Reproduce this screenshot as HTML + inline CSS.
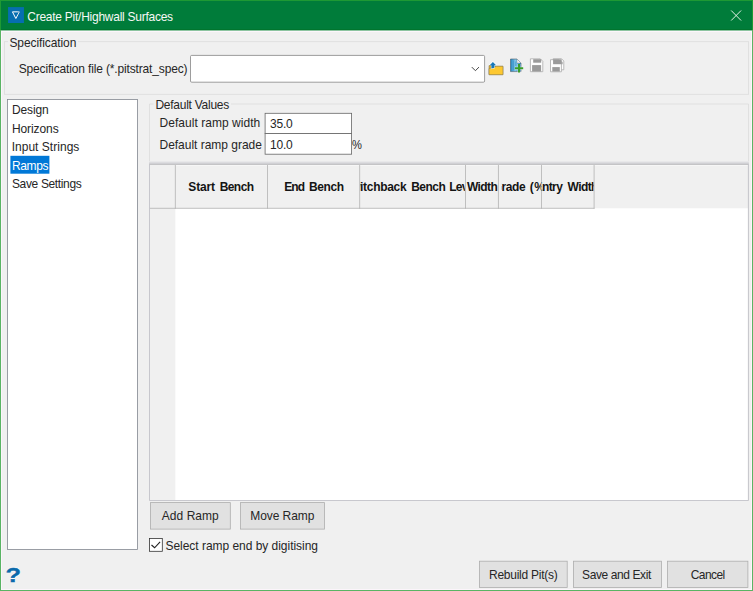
<!DOCTYPE html>
<html lang="en"><head><meta charset="utf-8"><title>Create Pit/Highwall Surfaces</title>
<style>
html,body{margin:0;padding:0;background:#f0f0f0;overflow:hidden;width:753px;height:591px}
#root{position:absolute;left:0;top:0;width:945px;height:740px;transform:scale(0.8);transform-origin:0 0;
  font-family:"Liberation Sans",sans-serif;font-size:15px;color:#000;background:#f0f0f0;overflow:hidden}
#root *{box-sizing:border-box}
.a{position:absolute}
.t{position:absolute;white-space:pre}

</style></head>
<body>
<div id="root">
<!-- all geometry drawn in one SVG: 1 unit = 1.25 css px = 1 device px after the 0.8 scale -->
<svg class="a" style="left:0;top:0" width="945" height="740" viewBox="0 0 756 592" shape-rendering="geometricPrecision">
<!-- window frame -->
<rect x="0" y="0" width="753.00" height="591.00" fill="#f0f0f0"/>
<rect x="0" y="0" width="753.00" height="30.40" fill="#007c3a"/>
<rect x="0" y="29" width="753.00" height="1.00" fill="#00752e"/>
<rect x="0" y="30" width="753.00" height="1.00" fill="#8cc4a0"/>
<rect x="0" y="31" width="753.00" height="1.00" fill="#fcf6fb"/>
<rect x="1" y="31" width="1.00" height="559.00" fill="#fcf5fb"/>
<rect x="751" y="31" width="1.00" height="559.00" fill="#fcf5fb"/>
<rect x="1" y="589" width="751.00" height="1.00" fill="#fcf5fb"/>
<rect x="0" y="30" width="1.00" height="561.00" fill="#5ab464"/>
<rect x="752" y="30" width="1.00" height="561.00" fill="#5ab464"/>
<rect x="0" y="590" width="753.00" height="1.00" fill="#5ab464"/>
<rect x="0" y="0" width="1.00" height="30.00" fill="#1e9934"/>
<rect x="752" y="0" width="1.00" height="30.00" fill="#1e9934"/>
<rect x="0" y="0" width="753.00" height="1.00" fill="#1e9934"/>
<!-- app icon -->
<rect x="8.05" y="7.1" width="15.90" height="15.90" fill="#066eb0"/>
<defs><linearGradient id="tg" x1="0" x2="1" y1="0" y2="0"><stop offset="0" stop-color="#fff"/><stop offset="0.6" stop-color="#fff"/><stop offset="1" stop-color="#c4d2dc"/></linearGradient></defs>
<path d="M12.45 11.85 H19.4 L15.85 18.5 Z" fill="none" stroke="url(#tg)" stroke-width="1" stroke-linejoin="miter"/>
<!-- close button -->
<path d="M731.2 10.5 L741.1 20.5 M741.1 10.5 L731.2 20.5" stroke="#eef5ee" stroke-width="0.95" fill="none"/>
<!-- Specification group box -->
<rect x="4.4" y="41.7" width="744.20" height="52.60" fill="none" stroke="#dcdcdc" stroke-width="0.8"/>
<rect x="8" y="36" width="70.00" height="12.00" fill="#f0f0f0"/>
<!-- combo box -->
<rect x="190.5" y="55.4" width="294.10" height="26.80" fill="#fff" stroke="#858585" stroke-width="0.8" rx="1.2"/>
<path d="M471.8 67.1 L475.4 70.7 L479 67.1" stroke="#3c3c3c" stroke-width="0.95" fill="none"/>
<!-- toolbar icons -->
 <!-- open folder with arrow -->
 <path d="M489 74.6 V65.6 H492.6 L493.6 66.4 H502.8 V74.6 Z" fill="#e2b02c" stroke="#8c7c50" stroke-width="0.6"/>
 <path d="M489 74.7 V68.6 L496.6 66.2 H503 V74.7 Z" fill="#fdc830" stroke="#8c7c50" stroke-width="0.6" stroke-linejoin="round"/>
 <path d="M492.9 61 L497 65.1 H495 V68.2 L490.9 69.3 V65.1 H488.9 Z" fill="#fff" opacity="0.75"/>
 <path d="M492.9 61.9 L496.1 65.2 H494.4 V67.8 L491.4 68.6 V65.2 H489.7 Z" fill="#1878b8"/>
 <!-- document with plus -->
 <defs><linearGradient id="pg" x1="0" x2="1" y1="0" y2="0"><stop offset="0" stop-color="#1f82bd"/><stop offset="0.45" stop-color="#86c8ea"/><stop offset="1" stop-color="#1f82bd"/></linearGradient></defs>
 <path d="M510.5 59 H517 L521 63 V71.6 H510.5 Z" fill="url(#pg)" stroke="#4a5c6a" stroke-width="0.6"/>
 <path d="M517 59 L521 63 H517 Z" fill="#f1f1f1" stroke="#8a8f94" stroke-width="0.4"/>
 <path d="M513.6 60.5 V70.4 M515.6 61.5 V66" stroke="#1f82bd" stroke-width="0.7" fill="none" opacity="0.6"/>
 <path d="M519 64 V72.5 M514.9 68.2 H523.2" stroke="#fff" stroke-width="3" fill="none" opacity="0.6"/>
 <path d="M519 64 V72.5 M514.9 68.2 H523.2" stroke="#3a9e2a" stroke-width="2" fill="none"/>
 <!-- save (disabled) -->
 <path d="M530.4 58.8 H540.3 L542.8 61.3 V71.7 H530.4 Z" fill="#fdfdfd" stroke="#adadad" stroke-width="0.85"/>
 <rect x="533.2" y="59.2" width="8" height="3.5" fill="#9a9a9a"/>
 <rect x="532.1" y="65.1" width="9" height="6.4" fill="#9a9a9a"/>
 <!-- save all (disabled) -->
 <path d="M553.2 58.7 H561.5 L563.8 61 V69.8 H553.2 Z" fill="#fdfdfd" stroke="#adadad" stroke-width="0.85"/>
 <path d="M550.5 59.7 H559.2 L561.4 61.9 V71.8 H550.5 Z" fill="#fdfdfd" stroke="#adadad" stroke-width="0.85"/>
 <rect x="553.1" y="59.3" width="8.6" height="4.9" fill="#9a9a9a"/>
 <path d="M561.7 61.2 V64.2 H562.6 V62 Z" fill="#9a9a9a"/>
 <rect x="552.3" y="67.1" width="7.5" height="4.4" fill="#9a9a9a"/>

<!-- list box -->
<rect x="7.5" y="99.5" width="130.00" height="449.90" fill="#fff" stroke="#828790" stroke-width="0.8"/>
<rect x="10.4" y="155.8" width="39.00" height="17.90" fill="#0078d7"/>
<!-- Default Values group box -->
<path d="M149.5 500.5 V104 H748.5 V500.5" fill="none" stroke="#dcdcdc" stroke-width="0.8"/>
<rect x="153.5" y="98" width="77.50" height="12.00" fill="#f0f0f0"/>
<rect x="265.1" y="113.3" width="86.50" height="20.30" fill="#fff" stroke="#666" stroke-width="0.8"/>
<rect x="265.1" y="133.6" width="86.50" height="20.60" fill="#fff" stroke="#666" stroke-width="0.8"/>
<!-- grid -->
<rect x="149.1" y="161" width="599.70" height="1.00" fill="#e8e8ea"/>
<rect x="149.1" y="162" width="599.70" height="1.00" fill="#dcdcdf"/>
<rect x="149.1" y="163" width="599.70" height="1.00" fill="#d0d0d4"/>
<rect x="149.1" y="164" width="599.70" height="1.00" fill="#c4c4c6"/>
<rect x="149.9" y="165" width="598.10" height="335.10" fill="#fff"/>
<rect x="149.9" y="165" width="598.10" height="43.30" fill="#f0f0f0"/>
<rect x="149.9" y="165" width="598.10" height="1.00" fill="#f6f6f6"/>
<rect x="149.9" y="165" width="25.45" height="335.10" fill="#f0f0f0"/>
<path d="M149.5 164.5 V500.5 H748.4 V164.5" fill="none" stroke="#c3c3c9" stroke-width="0.9"/>
<line x1="175.35" y1="165" x2="175.35" y2="208.7" stroke="#b2b2b2" stroke-width="0.8"/>
<line x1="267.5" y1="165" x2="267.5" y2="208.7" stroke="#b2b2b2" stroke-width="0.8"/>
<line x1="359.65" y1="165" x2="359.65" y2="208.7" stroke="#b2b2b2" stroke-width="0.8"/>
<line x1="465.5" y1="165" x2="465.5" y2="208.7" stroke="#b2b2b2" stroke-width="0.8"/>
<line x1="498.45" y1="165" x2="498.45" y2="208.7" stroke="#b2b2b2" stroke-width="0.8"/>
<line x1="541.5" y1="165" x2="541.5" y2="208.7" stroke="#b2b2b2" stroke-width="0.8"/>
<line x1="594.1" y1="165" x2="594.1" y2="208.7" stroke="#b2b2b2" stroke-width="0.8"/>
<line x1="149.9" y1="208.3" x2="594.5" y2="208.3" stroke="#b0b0b0" stroke-width="0.8"/>
<!-- buttons -->
<rect x="150.4" y="502.6" width="79.90" height="26.50" fill="#e1e1e1" stroke="#adadad" stroke-width="0.8"/>
<rect x="240.5" y="502.6" width="84.00" height="26.50" fill="#e1e1e1" stroke="#adadad" stroke-width="0.8"/>
<rect x="149.5" y="538.5" width="12.80" height="12.80" fill="#fff" stroke="#333" stroke-width="0.8"/>
<path d="M151.5 545 L154.6 547.8 L160.1 541.8" stroke="#222" stroke-width="1.15" fill="none"/>
<rect x="479.4" y="561.2" width="87.80" height="26.30" fill="#e1e1e1" stroke="#adadad" stroke-width="0.8"/>
<rect x="573.4" y="561.2" width="88.00" height="26.30" fill="#e1e1e1" stroke="#adadad" stroke-width="0.8"/>
<rect x="667.5" y="561.2" width="80.40" height="26.30" fill="#e1e1e1" stroke="#adadad" stroke-width="0.8"/>
</svg>

<span id="title" class="t" style="left:34.09px;top:12.55px;font-size:15px;line-height:15px;letter-spacing:-0.318px;color:#f6f8f6;">Create Pit/Highwall Surfaces</span>
<span id="gb1" class="t" style="left:11.75px;top:45.80px;font-size:15px;line-height:15px;letter-spacing:-0.111px;color:#262626;">Specification</span>
<span id="specfile" class="t" style="left:23.34px;top:77.68px;font-size:15px;line-height:15px;letter-spacing:-0.186px;color:#262626;">Specification file (*.pitstrat_spec)</span>
<span id="li1" class="t" style="left:14.90px;top:129.68px;font-size:15px;line-height:15px;letter-spacing:-0.145px;color:#262626;">Design</span>
<span id="li2" class="t" style="left:14.98px;top:152.80px;font-size:15px;line-height:15px;letter-spacing:-0.123px;color:#262626;">Horizons</span>
<span id="li3" class="t" style="left:14.54px;top:175.80px;font-size:15px;line-height:15px;letter-spacing:0.037px;color:#262626;">Input Strings</span>
<span id="li4" class="t" style="left:14.98px;top:198.80px;font-size:15px;line-height:15px;letter-spacing:-0.491px;color:#fff;">Ramps</span>
<span id="li5" class="t" style="left:14.96px;top:221.80px;font-size:15px;line-height:15px;letter-spacing:-0.442px;color:#262626;">Save Settings</span>
<span id="gb2" class="t" style="left:194.29px;top:123.05px;font-size:15px;line-height:15px;letter-spacing:-0.318px;color:#262626;">Default Values</span>
<span id="drw" class="t" style="left:199.38px;top:146.18px;font-size:15px;line-height:15px;letter-spacing:0.048px;color:#262626;">Default ramp width</span>
<span id="drg" class="t" style="left:199.38px;top:173.18px;font-size:15px;line-height:15px;letter-spacing:-0.027px;color:#262626;">Default ramp grade</span>
<span id="v1" class="t" style="left:337.51px;top:147.30px;font-size:15px;line-height:15px;letter-spacing:-0.243px;color:#262626;">35.0</span>
<span id="v2" class="t" style="left:337.54px;top:172.93px;font-size:15px;line-height:15px;letter-spacing:-0.253px;color:#262626;">10.0</span>
<span id="pct" class="t" style="left:439.92px;top:172.93px;font-size:15px;line-height:15px;letter-spacing:0.000px;color:#262626;transform:scaleX(0.93);transform-origin:0 0;">%</span>
<span id="addramp" class="t" style="left:202.21px;top:637.18px;font-size:15px;line-height:15px;letter-spacing:0.058px;color:#262626;">Add Ramp</span>
<span id="moveramp" class="t" style="left:312.82px;top:637.18px;font-size:15px;line-height:15px;letter-spacing:-0.082px;color:#262626;">Move Ramp</span>
<span id="cblabel" class="t" style="left:206.83px;top:674.55px;font-size:15px;line-height:15px;letter-spacing:-0.039px;color:#262626;">Select ramp end by digitising</span>
<span id="rebuild" class="t" style="left:611.27px;top:710.93px;font-size:15px;line-height:15px;letter-spacing:-0.319px;color:#262626;">Rebuild Pit(s)</span>
<span id="saveexit" class="t" style="left:727.65px;top:710.93px;font-size:15px;line-height:15px;letter-spacing:-0.509px;color:#262626;">Save and Exit</span>
<span id="cancel" class="t" style="left:863.41px;top:710.93px;font-size:15px;line-height:15px;letter-spacing:-0.738px;color:#262626;">Cancel</span>
<span id="h1a" class="t" style="left:235.42px;top:226.05px;font-size:15px;line-height:15px;letter-spacing:-0.226px;color:#141414;font-weight:bold;">Start</span>
<span id="h1b" class="t" style="left:274.56px;top:226.05px;font-size:15px;line-height:15px;letter-spacing:-0.691px;color:#141414;font-weight:bold;">Bench</span>
<span id="h2a" class="t" style="left:355.19px;top:226.05px;font-size:15px;line-height:15px;letter-spacing:-1.023px;color:#141414;font-weight:bold;">End</span>
<span id="h2b" class="t" style="left:386.33px;top:226.05px;font-size:15px;line-height:15px;letter-spacing:-0.505px;color:#141414;font-weight:bold;">Bench</span>
<div class="a" style="left:450px;top:0;width:131px;height:738px;overflow:hidden"><span id="h3a" class="t" style="left:-20.88px;top:226.05px;font-size:15px;line-height:15px;letter-spacing:-0.372px;color:#141414;font-weight:bold;">Switchback</span></div>
<div class="a" style="left:450px;top:0;width:131px;height:738px;overflow:hidden"><span id="h3b" class="t" style="left:63.98px;top:226.05px;font-size:15px;line-height:15px;letter-spacing:-0.653px;color:#141414;font-weight:bold;">Bench</span></div>
<div class="a" style="left:450px;top:0;width:131px;height:738px;overflow:hidden"><span id="h3c" class="t" style="left:111.44px;top:226.05px;font-size:15px;line-height:15px;letter-spacing:-0.838px;color:#141414;font-weight:bold;">Level</span></div>
<div class="a" style="left:582px;top:0;width:41px;height:738px;overflow:hidden"><span id="h4" class="t" style="left:1.77px;top:226.05px;font-size:15px;line-height:15px;letter-spacing:-0.761px;color:#141414;font-weight:bold;">Width</span></div>
<div class="a" style="left:627px;top:0;width:49px;height:738px;overflow:hidden"><span id="h5a" class="t" style="left:-11.10px;top:226.05px;font-size:15px;line-height:15px;letter-spacing:-0.566px;color:#141414;font-weight:bold;">Grade</span></div>
<div class="a" style="left:624px;top:0;width:52px;height:738px;overflow:hidden"><span id="h5b" class="t" style="left:38.17px;top:226.05px;font-size:15px;line-height:15px;letter-spacing:0.547px;color:#141414;font-weight:bold;">(%)</span></div>
<div class="a" style="left:677px;top:0;width:65px;height:738px;overflow:hidden"><span id="h6a" class="t" style="left:-8.78px;top:226.05px;font-size:15px;line-height:15px;letter-spacing:-0.767px;color:#141414;font-weight:bold;">Entry</span></div>
<div class="a" style="left:677px;top:0;width:65px;height:738px;overflow:hidden"><span id="h6b" class="t" style="left:32.52px;top:226.05px;font-size:15px;line-height:15px;letter-spacing:-0.748px;color:#141414;font-weight:bold;">Width</span></div>
<span id="help" class="t" style="left:6.50px;top:705.62px;font-size:26px;line-height:26px;letter-spacing:0.000px;color:#0a6aab;transform:scaleX(1.22);transform-origin:0 0;-webkit-text-stroke:0.5px #0a6aab;text-shadow:0 0 1.5px #fff,0 0 1.5px #fff,0 0 2px #fff;font-weight:bold;">?</span>
</div>
</body></html>
